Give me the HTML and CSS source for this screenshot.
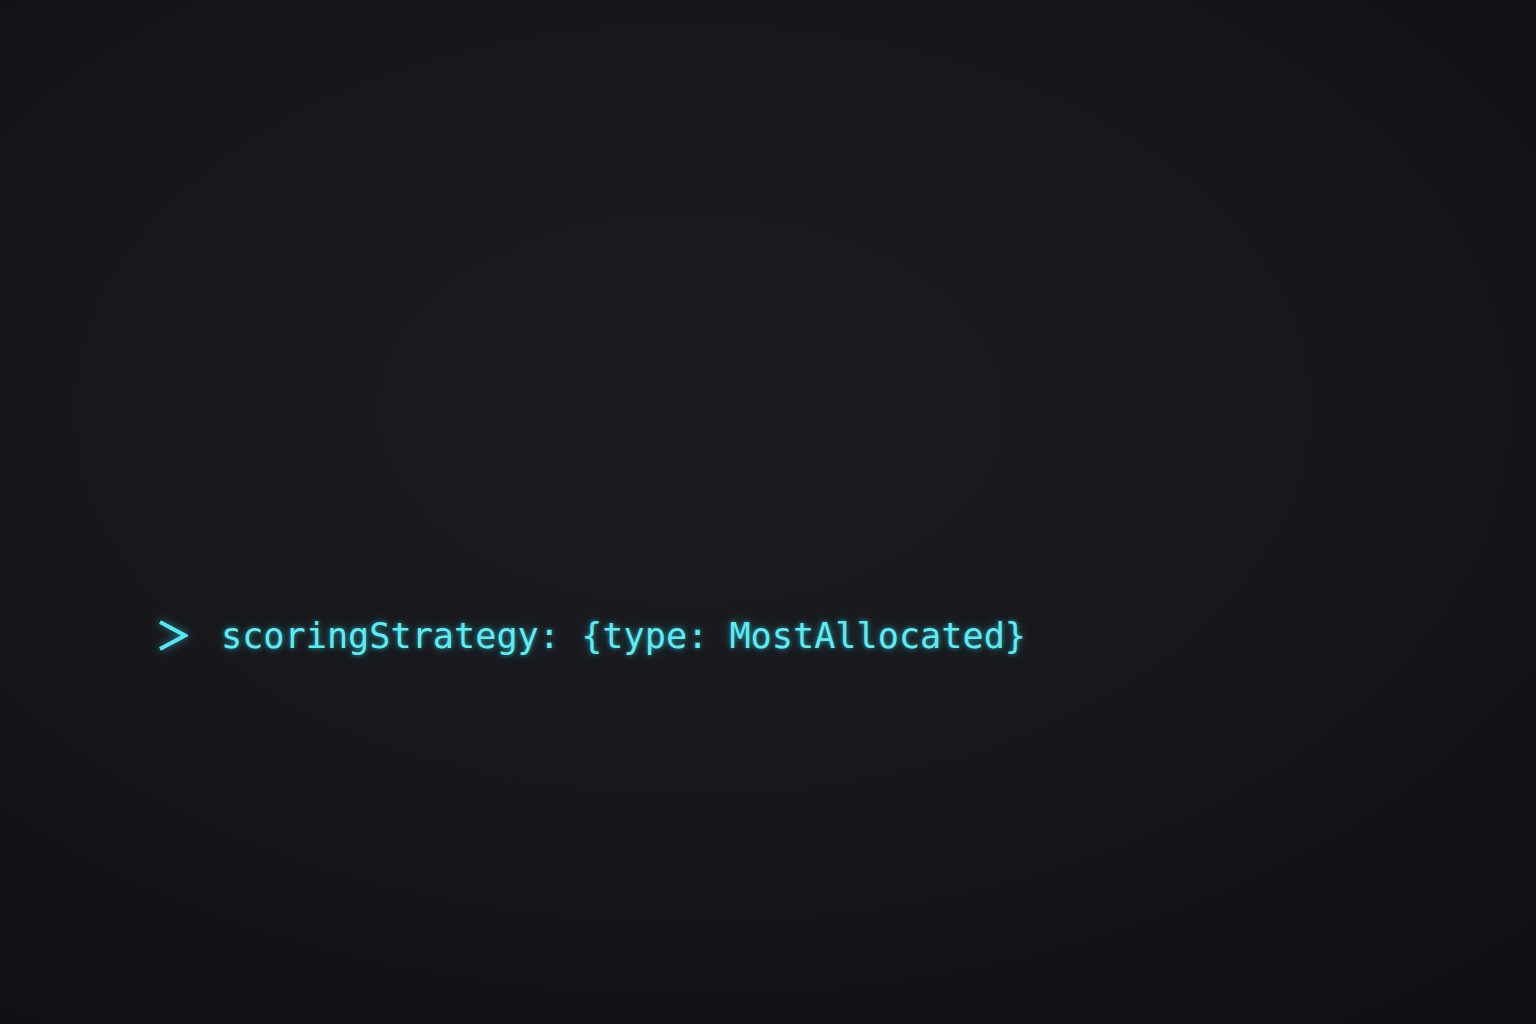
FILE: index.html
```html
<!DOCTYPE html>
<html lang="en">
<head>
<meta charset="utf-8">
<title>Terminal</title>
<link rel="stylesheet" href="styles.css">
</head>
<body>
<main class="screen">
  <div class="line">
    <svg class="prompt" width="30" height="32" viewBox="0 0 30 32" aria-hidden="true">
      <polyline points="2,2 27,15.5 2,29" fill="none" stroke="#55e8f2" stroke-width="4" stroke-linejoin="miter" stroke-linecap="butt"/>
    </svg>
    <span class="code">scoringStrategy: {type: MostAllocated}</span>
  </div>
</main>
</body>
</html>
```
FILE: styles.css
```css
html, body {
  margin: 0;
  padding: 0;
  height: 100%;
}
body {
  background: radial-gradient(ellipse 80% 75% at 45% 40%, #1c1c20 0%, #17171b 55%, #101014 100%);
  overflow: hidden;
}
.screen {
  height: 100%;
  box-sizing: border-box;
  padding: 612px 0 0 158px;
}
.line {
  display: flex;
  align-items: center;
  gap: 33px;
  height: 48px;
}
.prompt {
  flex: none;
  filter: drop-shadow(0 0 4px rgba(60, 225, 240, 0.6));
}
.code {
  font-family: "DejaVu Sans Mono", monospace;
  font-size: 35.2px;
  line-height: 48px;
  color: #5eecf4;
  white-space: pre;
  text-shadow: 0 0 5px rgba(60, 225, 240, 0.6), 0 0 14px rgba(60, 225, 240, 0.28);
}
```
